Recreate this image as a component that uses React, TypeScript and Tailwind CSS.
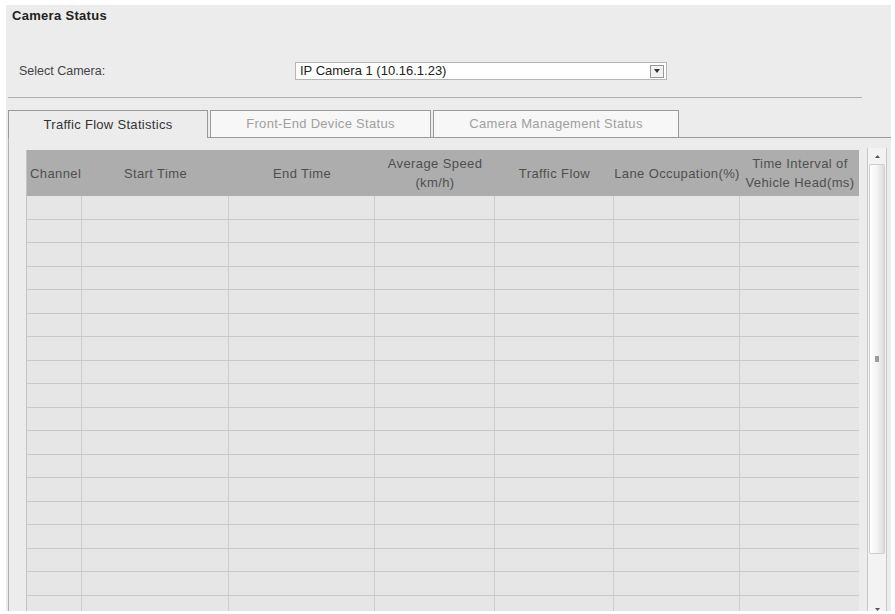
import React from "react";

const columns = [
  { label: "Channel", w: "w-[55px]", align: "text-left pl-[3px]" },
  { label: "Start Time", w: "w-[147px]", align: "text-center" },
  { label: "End Time", w: "w-[146px]", align: "text-center" },
  { label: "Average Speed\n(km/h)", w: "w-[120px]", align: "text-center" },
  { label: "Traffic Flow", w: "w-[119px]", align: "text-center" },
  { label: "Lane Occupation(%)", w: "w-[126px]", align: "text-center" },
  { label: "Time Interval of\nVehicle Head(ms)", w: "w-[120px]", align: "text-center" },
];

const rows = Array.from({ length: 18 }, (_, i) => i);

function Tab({ label, active, w }: { label: string; active?: boolean; w: string }) {
  return (
    <div
      className={`${w} h-[28px] flex items-center justify-center border-t border-x border-[#9a9a9a] text-[13px] tracking-[0.3px] ${
        active ? "bg-[#ececec] text-[#333]" : "bg-[#f7f7f7] text-[#a0a0a0] border-b"
      }`}
    >
      {label}
    </div>
  );
}

export default function App() {
  return (
    <div className="w-[895px] h-[614px] bg-white pt-[5px] pl-[6px] overflow-hidden" style={{ fontFamily: '"Liberation Sans", Arial, sans-serif' }}>
      <div className="w-[885px] h-[606px] bg-[#ececec] flex flex-col">
        <div className="pl-[6px] pt-[2px] text-[13px] font-bold tracking-[0.3px] text-[#222] leading-[17px]">Camera Status</div>

        <div className="flex items-center mt-[38px] h-[18px]">
          <span className="pl-[13px] w-[289px] text-[12.5px] text-[#444]">Select Camera:</span>
          <div className="w-[372px] h-[18px] bg-white border border-[#b5b5b5] flex items-center justify-between pl-[4px] pr-[2px]">
            <span className="text-[13px] text-[#222]">IP Camera 1 (10.16.1.23)</span>
            <div className="w-[14px] h-[13px] border border-[#999] bg-[#f2f2f2] flex items-center justify-center">
              <svg width="6" height="4" viewBox="0 0 6 4">
                <path d="M0 0h6L3 4z" fill="#333" />
              </svg>
            </div>
          </div>
        </div>

        <div className="ml-[2px] mt-[17px] w-[854px] border-t border-[#b0b0b0]" />

        <div className="flex mt-[12px] ml-[2px] items-end">
          <Tab label="Traffic Flow Statistics" active w="w-[200px]" />
          <div className="w-[2px] h-[28px] border-b border-[#9a9a9a]" />
          <Tab label="Front-End Device Status" w="w-[221px]" />
          <div className="w-[2px] h-[28px] border-b border-[#9a9a9a]" />
          <Tab label="Camera Management Status" w="w-[246px]" />
          <div className="flex-1 h-[28px] border-b border-[#9a9a9a]" />
        </div>

        <div className="flex-1 ml-[2px] border-l border-[#b0b0b0] flex pt-[12px] pl-[17px] overflow-hidden">
          <div className="w-[833px] border-l border-[#c4c4c4] overflow-hidden">
            <div className="flex h-[46px] bg-[#adadad]">
              {columns.map((c) => (
                <div
                  key={c.label}
                  className={`${c.w} ${c.align} shrink-0 flex items-center ${c.align === "text-center" ? "justify-center" : ""} text-[13px] tracking-[0.4px] leading-[19px] text-[#4f4f4f] whitespace-pre-line`}
                >
                  {c.label}
                </div>
              ))}
            </div>
            {rows.map((r) => (
              <div key={r} className="flex h-[23.5px] border-b border-[#c9c9c9] bg-[#e6e6e6]">
                {columns.map((c) => (
                  <div key={c.label} className={`${c.w} shrink-0 border-r border-[#cdcdcd]`} />
                ))}
              </div>
            ))}
          </div>

          <div className="ml-[8px] w-[20px] h-[469px] -mt-[2px] border-x border-[#c8c8c8] bg-[#f3f3f3] flex flex-col items-center">
            <div className="h-[16px] w-full flex items-center justify-center">
              <svg width="5" height="3" viewBox="0 0 5 3">
                <path d="M0 3h5L2.5 0z" fill="#555" />
              </svg>
            </div>
            <div className="w-[16px] h-[390px] bg-gradient-to-r from-[#ffffff] via-[#f4f4f4] to-[#dcdcdc] border border-[#cfcfcf] rounded-[2px] flex items-center justify-center">
              <div className="w-[4px] h-[6px] bg-[#777] opacity-70" />
            </div>
            <div className="flex-1 w-full flex items-end justify-center pb-[6px]">
              <svg width="5" height="3" viewBox="0 0 5 3">
                <path d="M0 0h5L2.5 3z" fill="#555" />
              </svg>
            </div>
          </div>
        </div>
      </div>
    </div>
  );
}
